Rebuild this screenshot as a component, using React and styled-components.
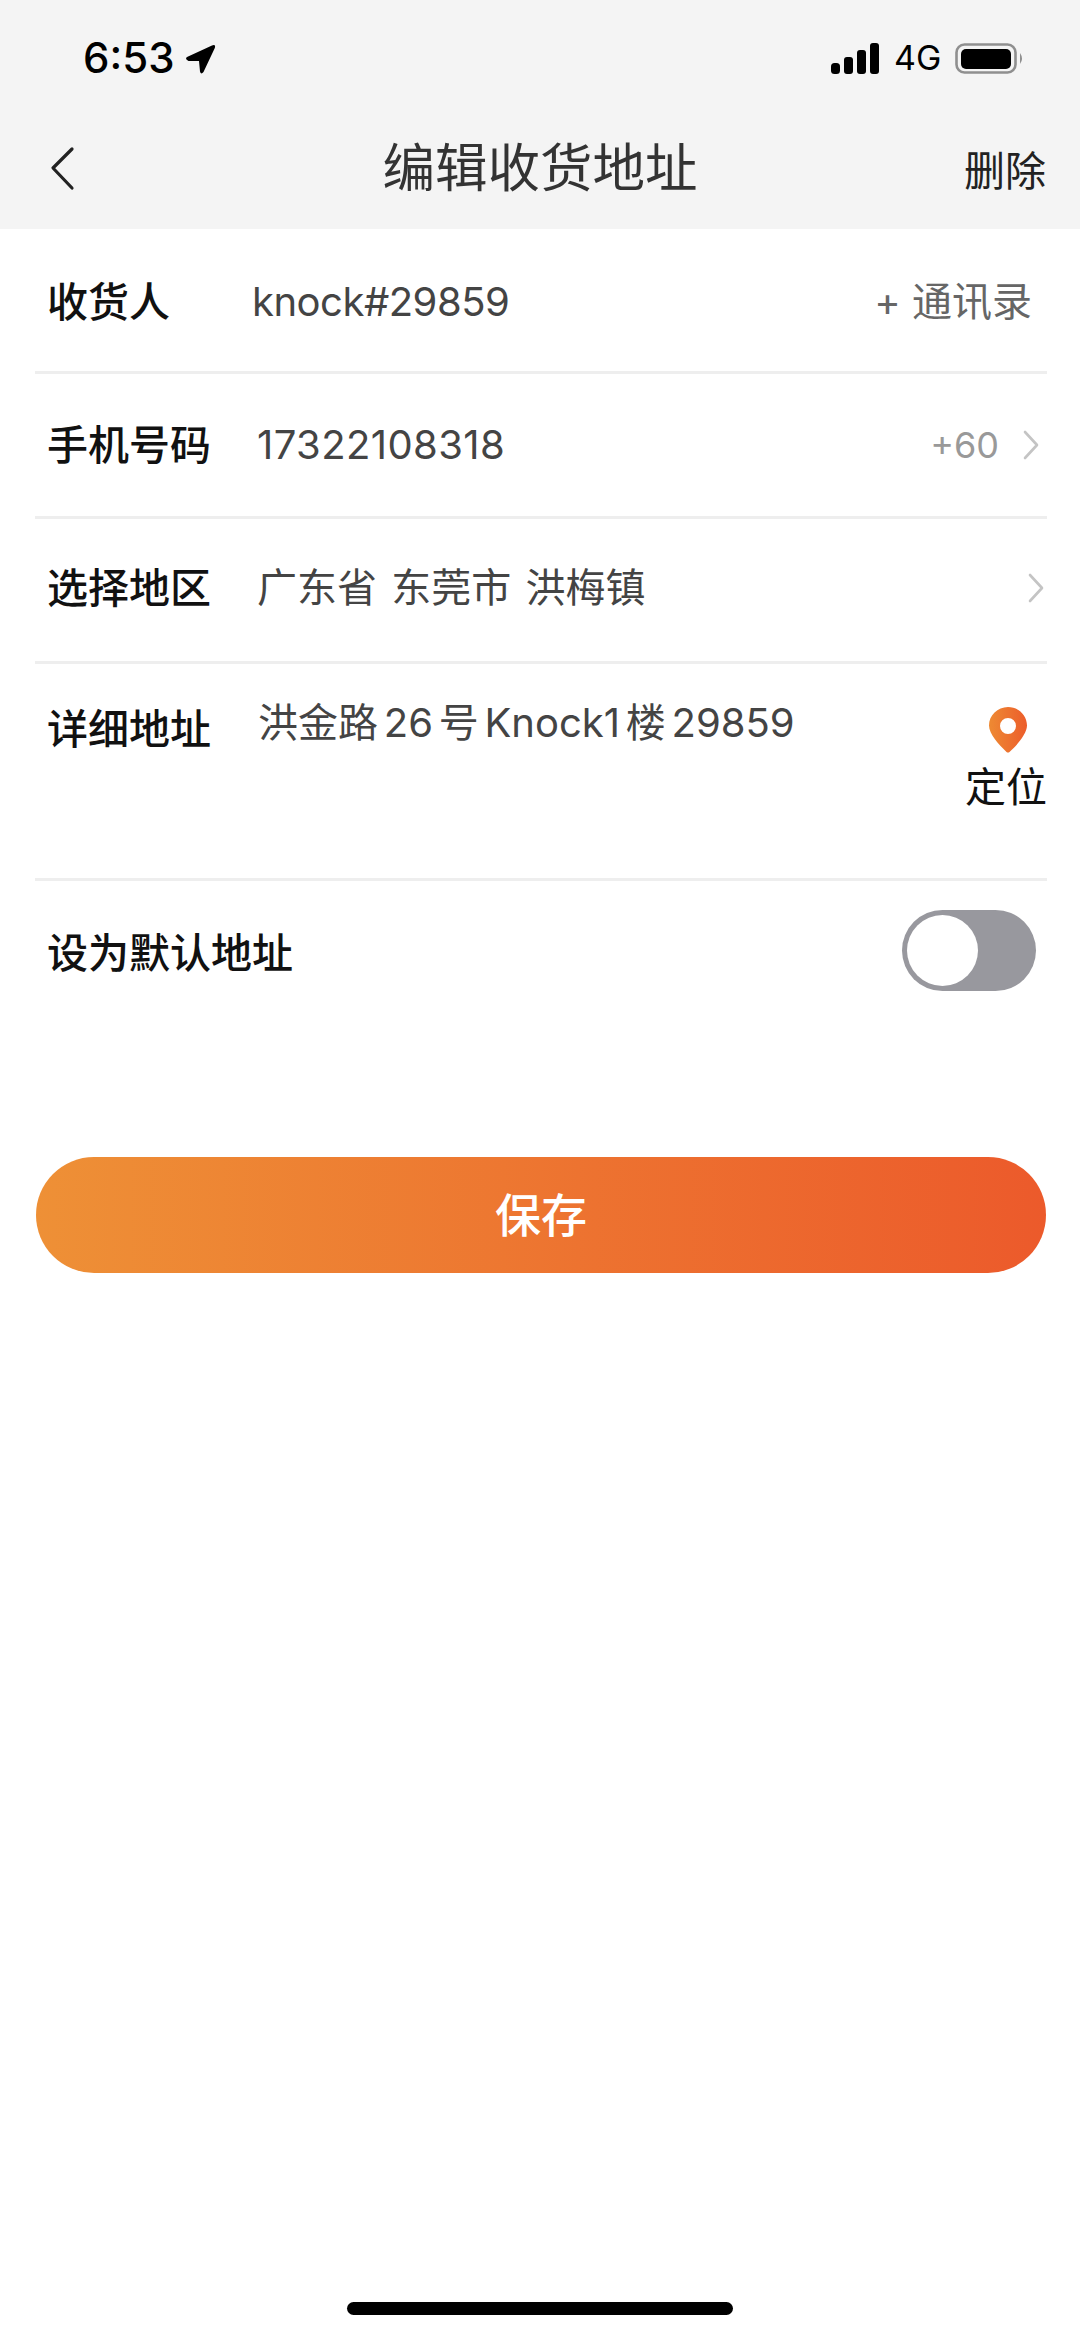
import React from "react";
import styled, { createGlobalStyle } from "styled-components";

const Global = createGlobalStyle`
  html, body { margin: 0; padding: 0; background: #fff; }
  * { box-sizing: border-box; }
  body { font-family: Inter, "Noto Sans CJK SC", sans-serif; }
`;
const CJK = `Inter, "Noto Sans CJK SC", sans-serif`;

const Page = styled.div`
  width: 1080px; height: 2337px; display: flex; flex-direction: column; background: #fff; overflow: hidden;
`;
const Head = styled.header`
  height: 229px; background: #f4f4f4; display: flex; flex-direction: column;
`;
const StatusBar = styled.div`
  height: 115px; display: flex; align-items: flex-start; padding: 33px 56px 0 83px; color: #000;
`;
const Time = styled.span`
  font: 500 42px/50px Inter, sans-serif; width: 103px;
`;
const LocationArrow = styled.svg`
  margin-top: 11px;
`;
const StatusRight = styled.div`
  margin-left: auto; display: flex; align-items: center; height: 50px; gap: 15px;
`;
const Net = styled.span`
  font: 400 34px/50px Inter, sans-serif; width: 46px;
`;
const Nav = styled.div`
  flex: 1; display: grid; grid-template-columns: 1fr auto 1fr; align-items: center; padding: 0 34px 8px;
`;
const Title = styled.h1`
  margin: 0; font: 400 52.5px/64px ${CJK}; color: #333;
`;
const BackIcon = styled.svg`
  justify-self: start; margin-left: 14px;
`;
const Delete = styled.span`
  justify-self: end; margin-top: 5px; font: 400 41px/52px ${CJK}; color: #222;
`;
const Form = styled.div`
  margin: 0 33px 0 35px; display: flex; flex-direction: column;
`;
const Row = styled.div`
  height: ${p => p.$h}px; display: flex; align-items: ${p => p.$top ? "flex-start" : "center"};
  padding: ${p => p.$pt || 0}px 0 ${p => p.$pb || 0}px 12px;
  border-bottom: ${p => p.$last ? "none" : "3px solid #eeeeee"};
`;
const Label = styled.span`
  width: ${p => p.$w}px; flex: none; font: 500 41px/52px ${CJK}; color: #111;
  margin-top: ${p => p.$mt || 0}px;
`;
const Value = styled.span`
  font: 400 40px/52px ${CJK}; color: #444; margin-top: ${p => p.$mt || 0}px; word-spacing: ${p => p.$ws || 0}px;
  letter-spacing: ${p => p.$ls || 0}px;
`;
const Right = styled.div`
  margin-left: auto; display: flex; align-items: center;
`;
const Contacts = styled.span`
  font: 400 40px/52px ${CJK}; color: #666; margin-right: 15px;
`;
const Code = styled.span`
  font: 400 36px/52px Inter, sans-serif; color: #999; margin-right: 24px;
`;
const Chevron = styled.svg`
  margin-right: ${p => p.$mr}px;
`;
const Locate = styled.div`
  margin-left: auto; display: flex; flex-direction: column; align-items: center; padding-top: 43px;
`;
const Pin = styled.svg`
  margin-left: 4px;
`;
const LocateText = styled.span`
  font: 400 41px/52px ${CJK}; color: #111; margin-top: 8px;
`;
const Toggle = styled.div`
  margin: 0 11px 6px auto; width: 134px; height: 81px; border-radius: 41px; background: #98989e; padding: 5px;
`;
const Knob = styled.div`
  width: 71px; height: 71px; border-radius: 50%; background: #fff;
`;
const SaveButton = styled.button`
  margin: 144px 34px 0 36px; height: 116px; border: 0; border-radius: 58px; color: #fff;
  background: linear-gradient(90deg, #ee9036 0%, #ec5a2b 100%);
  font: 500 46px/56px ${CJK};
  padding: 0;
`;
const HomeBar = styled.div`
  width: 386px; height: 13px; border-radius: 7px; background: #000; margin: auto auto 22px;
`;

const Chev = ({ mr }) => (
  <Chevron $mr={mr} width="16" height="30" viewBox="0 0 16 30" fill="none">
    <path d="M2 2 L14 15 L2 28" stroke="#c4c4c4" strokeWidth="2.6" strokeLinecap="round" strokeLinejoin="round" />
  </Chevron>
);

export default function App() {
  return (
    <Page>
      <Global />
      <Head>
        <StatusBar>
          <Time>6:53</Time>
          <LocationArrow width="30" height="30" viewBox="0 0 30 30">
            <path d="M1 13 L26 1.5 Q30 0 28.8 4 L17.5 28 Q15 31 14 27.5 L13 17 L2.5 17 Q-1.5 15 1 13 Z" fill="#000" />
          </LocationArrow>
          <StatusRight>
            <svg width="48" height="31" viewBox="0 0 48 31">
              <rect x="0" y="20" width="9" height="11" rx="3.5" fill="#000" />
              <rect x="13" y="14" width="9" height="17" rx="3" fill="#000" />
              <rect x="26" y="7" width="9" height="24" rx="3" fill="#000" />
              <rect x="39" y="0" width="9" height="31" rx="3" fill="#000" />
            </svg>
            <Net>4G</Net>
            <svg width="69" height="31" viewBox="0 0 69 31">
              <rect x="1.5" y="1.5" width="59" height="28" rx="8" fill="none" stroke="#8f8f8f" strokeWidth="2.6" />
              <rect x="6" y="6" width="50" height="20" rx="5" fill="#000" />
              <path d="M65 10 Q69 15.5 65 21 Z" fill="#8f8f8f" />
            </svg>
          </StatusRight>
        </StatusBar>
        <Nav>
          <BackIcon width="28" height="46" viewBox="0 0 28 46" fill="none">
            <path d="M24 4 L5 23 L24 43" stroke="#222" strokeWidth="3.2" strokeLinecap="round" strokeLinejoin="round" />
          </BackIcon>
          <Title>编辑收货地址</Title>
          <Delete>删除</Delete>
        </Nav>
      </Head>
      <Form>
        <Row $h={145} $pt={4}>
          <Label $w={205}>收货人</Label>
          <Value $ls={-0.5}>knock#29859</Value>
          <Right><Contacts>+ 通讯录</Contacts></Right>
        </Row>
        <Row $h={145}>
          <Label $w={210}>手机号码</Label>
          <Value $ls={0.4}>17322108318</Value>
          <Right>
            <Code>+60</Code>
            <Chev mr={8} />
          </Right>
        </Row>
        <Row $h={145} $pb={4}>
          <Label $w={210}>选择地区</Label>
          <Value $ws={3}>广东省 东莞市 洪梅镇</Value>
          <Right><Chev mr={3} /></Right>
        </Row>
        <Row $h={217} $top>
          <Label $w={211} $mt={39}>详细地址</Label>
          <Value $mt={33} $ws={-5.5}>洪金路 26 号 Knock1 楼 29859</Value>
          <Locate>
            <Pin width="38" height="46" viewBox="0 0 38 46">
              <defs>
                <linearGradient id="pin" x1="0" x2="1" y1="0" y2="0">
                  <stop offset="0" stopColor="#ee8a33" />
                  <stop offset="1" stopColor="#ec5d2b" />
                </linearGradient>
              </defs>
              <path fillRule="evenodd" fill="url(#pin)" d="M19 0 C29.5 0 38 8.3 38 18.6 C38 27 28 38 20.5 45 Q19 46 17.5 45 C10 38 0 27 0 18.6 C0 8.3 8.5 0 19 0 Z M19 11 A8 8 0 1 0 19 27 A8 8 0 1 0 19 11 Z" />
            </Pin>
            <LocateText>定位</LocateText>
          </Locate>
        </Row>
        <Row $h={132} $last $pt={12}>
          <Label $w={260}>设为默认地址</Label>
          <Toggle><Knob /></Toggle>
        </Row>
      </Form>
      <SaveButton>保存</SaveButton>
      <HomeBar />
    </Page>
  );
}
